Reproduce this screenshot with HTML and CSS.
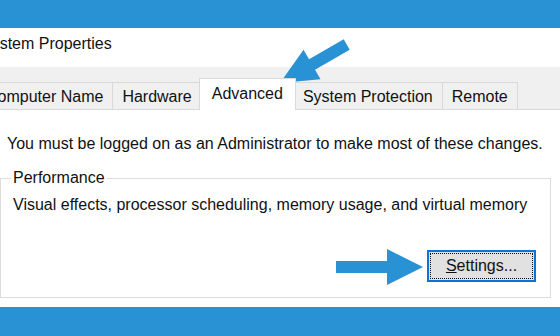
FILE: index.html
```html
<!DOCTYPE html>
<html lang="en">
<head>
    <meta charset="UTF-8">
    <meta name="viewport" content="width=device-width, initial-scale=1.0">
    <title>System Properties</title>
    <link rel="stylesheet" href="styles.css">
</head>
<body>
    <div class="window">
        <div class="topbar"></div>
        <div class="titlebar">
            <span class="title">System Properties</span>
        </div>

        <div class="tabstrip">
            <div class="tab tab-first">Computer Name</div>
            <div class="tab">Hardware</div>
            <div class="tab active">Advanced</div>
            <div class="tab">System Protection</div>
            <div class="tab">Remote</div>
        </div>

        <div class="page">
            <p class="notice">You must be logged on as an Administrator to make most of these changes.</p>
            <fieldset class="group">
                <legend>Performance</legend>
                <p>Visual effects, processor scheduling, memory usage, and virtual memory</p>
                <div class="group-actions">
                    <button class="btn focused"><span><u>S</u>ettings...</span></button>
                </div>
            </fieldset>
        </div>

        <div class="bottombar"></div>

        <!-- arrows drawn on top of the dialog -->
        <svg class="arrows" width="560" height="336" viewBox="0 0 560 336">
            <polygon transform="translate(280 83) rotate(150)"
                     points="-77,-6 -37,-6 -37,-17 0,0 -37,17 -37,6 -77,6"/>
            <polygon points="336,261 387,261 387,249 423,267 387,285 387,273 336,273"/>
        </svg>
    </div>
</body>
</html>
```

FILE: styles.css
```css
body {
    margin: 0;
    padding: 0;
    font-family: "Liberation Sans", Arial, sans-serif;
    font-size: 16px;
    color: #111;
    background: #fff;
}
.window {
    position: relative;
    width: 560px;
    height: 336px;
    overflow: hidden;
}
.topbar {
    height: 28px;
    background: #2892d5;
}
.titlebar {
    height: 39px;
    box-sizing: border-box;
    padding-top: 6px;
    background: #fff;
    line-height: 20px;
    white-space: nowrap;
}
.title {
    display: inline-block;
    margin-left: -19px;
}
.tabstrip {
    display: flex;
    align-items: flex-end;
    height: 42px;
    margin-left: -24px;
    background: #f0f0f0;
    border-bottom: 1px solid #d9d9d9;
    white-space: nowrap;
}
.tab {
    box-sizing: border-box;
    height: 27px;
    padding: 2px 9px 0;
    line-height: 24px;
    border: 1px solid #d9d9d9;
    border-bottom: none;
    margin-left: -1px;
    background: #f0f0f0;
}
.tab-first {
    margin-left: 0;
}
.tab.active {
    position: relative;
    z-index: 1;
    height: 32px;
    padding: 3px 12px 4px;
    margin: 0 -2px -1px -3px;
    background: #fff;
}
.page {
    height: 197px;
    background: #fff;
}
.notice {
    margin: 0;
    padding: 24px 0 0 7px;
    line-height: 20px;
    white-space: nowrap;
}
.group {
    margin: 14px 9px 0 0;
    padding: 0 14px 15px 12px;
    border: 1px solid #dcdcdc;
    min-width: 0;
}
.group legend {
    padding: 0 2px;
    margin-left: -2px;
    line-height: 20px;
}
.group p {
    margin: 7px 0 0;
    line-height: 20px;
    white-space: nowrap;
}
.group-actions {
    display: flex;
    justify-content: flex-end;
    margin-top: 35px;
}
.btn {
    box-sizing: border-box;
    width: 109px;
    height: 32px;
    padding: 1px;
    border: 2px solid #0a74d8;
    background: #e1e1e1;
    font-family: inherit;
    font-size: 16px;
    color: #111;
}
.btn span {
    display: block;
    box-sizing: border-box;
    height: 100%;
    border: 1px dotted #111;
    line-height: 24px;
    text-align: center;
}
.bottombar {
    height: 29px;
    background: #2892d5;
}
.arrows {
    position: absolute;
    left: 0;
    top: 0;
    pointer-events: none;
    fill: #2892d5;
}
```
